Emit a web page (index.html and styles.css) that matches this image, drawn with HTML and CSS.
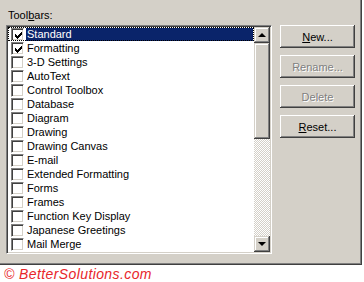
FILE: index.html
```
<!DOCTYPE html>
<html lang="en">
<head>
    <meta charset="UTF-8">
    <title>Customize - Toolbars</title>
    <link rel="stylesheet" href="styles.css">
</head>
<body>
    <div class="dialog">
        <div class="main">
            <div class="left">
                <div class="label">Tool<u>b</u>ars:</div>
                <div class="listbox">
                    <ul class="list">
                        <li class="selected"><span class="check on"><svg viewBox="0 0 9 9"><path d="M1.5 3.5 L3.5 5.5 L7.5 1.5 M1.5 4.5 L3.5 6.5 L7.5 2.5 M1.5 5.5 L3.5 7.5 L7.5 3.5"/></svg></span><span class="text">Standard</span></li>
                        <li><span class="check on"><svg viewBox="0 0 9 9"><path d="M1.5 3.5 L3.5 5.5 L7.5 1.5 M1.5 4.5 L3.5 6.5 L7.5 2.5 M1.5 5.5 L3.5 7.5 L7.5 3.5"/></svg></span><span class="text">Formatting</span></li>
                        <li><span class="check"></span><span class="text">3-D Settings</span></li>
                        <li><span class="check"></span><span class="text">AutoText</span></li>
                        <li><span class="check"></span><span class="text">Control Toolbox</span></li>
                        <li><span class="check"></span><span class="text">Database</span></li>
                        <li><span class="check"></span><span class="text">Diagram</span></li>
                        <li><span class="check"></span><span class="text">Drawing</span></li>
                        <li><span class="check"></span><span class="text">Drawing Canvas</span></li>
                        <li><span class="check"></span><span class="text">E-mail</span></li>
                        <li><span class="check"></span><span class="text">Extended Formatting</span></li>
                        <li><span class="check"></span><span class="text">Forms</span></li>
                        <li><span class="check"></span><span class="text">Frames</span></li>
                        <li><span class="check"></span><span class="text">Function Key Display</span></li>
                        <li><span class="check"></span><span class="text">Japanese Greetings</span></li>
                        <li><span class="check"></span><span class="text">Mail Merge</span></li>
                    </ul>
                    <div class="scrollbar">
                        <div class="sb-btn"><span class="arrow up"></span></div>
                        <div class="thumb"></div>
                        <div class="track"></div>
                        <div class="sb-btn"><span class="arrow down"></span></div>
                    </div>
                </div>
            </div>
            <div class="buttons">
                <button><u>N</u>ew...</button>
                <button disabled>Rename...</button>
                <button disabled>Delete</button>
                <button><u>R</u>eset...</button>
            </div>
        </div>
    </div>
    <div class="footer">&copy; BetterSolutions.com</div>
</body>
</html>
```
FILE: styles.css
```
body {
    margin: 0;
    background: #fff;
    font-family: "Liberation Sans", Arial, sans-serif;
    font-size: 11px;
    color: #000;
}
.dialog {
    width: 362px;
    height: 265px;
    box-sizing: border-box;
    padding-top: 9px;
    background: #d4d0c8;
    border-right: 1px solid #404040;
    border-bottom: 1px solid #404040;
    box-shadow: inset -1px -1px #808080;
}
.main {
    display: flex;
    align-items: flex-start;
}
.left {
    margin-left: 6px;
}
.label {
    line-height: 13px;
    padding-left: 2px;
    margin-bottom: 3px;
}
.listbox {
    display: flex;
    width: 266px;
    height: 229px;
    box-sizing: border-box;
    border: 1px solid;
    border-color: #808080 #fff #fff #808080;
    box-shadow: inset 1px 1px #404040, inset -1px -1px #d4d0c8;
    padding: 1px;
    background: #fff;
}
.list {
    list-style: none;
    margin: 0;
    padding: 0;
    flex: 1;
}
.list li {
    display: flex;
    align-items: center;
    height: 14px;
    box-sizing: border-box;
    padding-left: 3px;
}
.list li.selected {
    outline: 1px dotted #000;
    outline-offset: -1px;
    padding-right: 1px;
}
.check {
    width: 13px;
    height: 13px;
    box-sizing: border-box;
    border: 1px solid;
    border-color: #808080 #fff #fff #808080;
    box-shadow: inset 1px 1px #404040, inset -1px -1px #d4d0c8;
    background: #fff;
    padding: 2px;
    flex-shrink: 0;
}
.check svg {
    display: block;
    width: 9px;
    height: 9px;
    fill: none;
    stroke: #000;
    stroke-width: 1;
    shape-rendering: crispEdges;
}
.text {
    margin-left: 2px;
    padding-left: 1px;
    line-height: 14px;
    height: 13px;
    display: flex;
    align-items: center;
}
.selected .text {
    flex: 1;
    background: #0a246a;
    color: #fff;
}
.scrollbar {
    width: 16px;
    display: flex;
    flex-direction: column;
}
.sb-btn, .thumb {
    background: #d4d0c8;
    box-shadow: inset -1px -1px #404040, inset 1px 1px #d4d0c8, inset -2px -2px #808080, inset 2px 2px #fff;
}
.sb-btn {
    height: 16px;
    display: flex;
    align-items: center;
    justify-content: center;
}
.thumb {
    height: 96px;
}
.track {
    flex: 1;
    background: repeating-conic-gradient(#fff 0 25%, #d4d0c8 0 50%) 0 0 / 2px 2px;
}
.arrow {
    width: 0;
    height: 0;
    border-left: 4px solid transparent;
    border-right: 4px solid transparent;
}
.arrow.up {
    border-bottom: 4px solid #000;
    margin-top: -1px;
}
.arrow.down {
    border-top: 4px solid #000;
}
.buttons {
    display: flex;
    flex-direction: column;
    gap: 7px;
    margin-left: 8px;
    margin-top: 16px;
}
button {
    width: 75px;
    height: 23px;
    padding: 0;
    font-family: inherit;
    font-size: 11px;
    color: #000;
    background: #d4d0c8;
    border: none;
    box-shadow: inset -1px -1px #404040, inset 1px 1px #fff, inset -2px -2px #808080, inset 2px 2px #d4d0c8;
}
button:disabled {
    color: #808080;
    text-shadow: 1px 1px #fff;
}
.footer {
    padding: 3px 0 0 4px;
    color: #e8262a;
    font-style: italic;
    font-size: 14px;
    line-height: 13px;
    letter-spacing: 0.4px;
}
```
